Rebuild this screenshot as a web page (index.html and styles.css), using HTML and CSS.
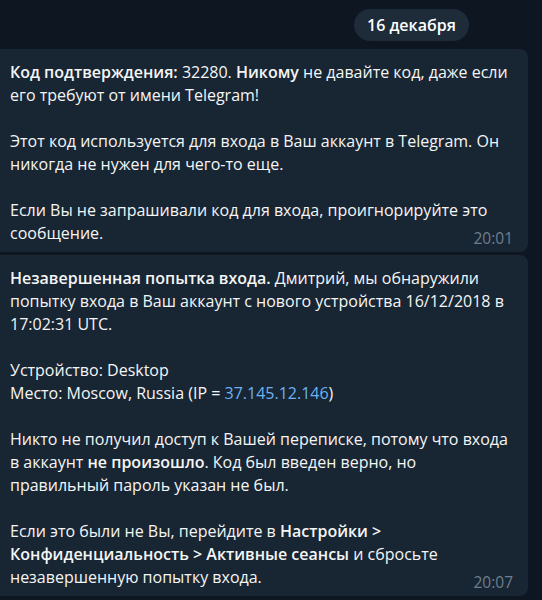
FILE: index.html
```html
<!DOCTYPE html>
<html lang="ru">
<head>
<meta charset="utf-8">
<link rel="stylesheet" href="styles.css">
</head>
<body>
<div class="chat">
  <div class="date-row"><span class="date">16 декабря</span></div>
  <div class="bubble">
    <p><b>Код подтверждения:</b> 32280. <b>Никому</b> не давайте код, даже если его требуют от имени Telegram!</p>
    <p>Этот код используется для входа в Ваш аккаунт в Telegram. Он никогда не нужен для чего-то еще.</p>
    <p>Если Вы не запрашивали код для входа, проигнорируйте это сообщение.</p>
    <span class="time">20:01</span>
  </div>
  <div class="bubble">
    <p><b>Незавершенная попытка входа.</b> Дмитрий, мы обнаружили попытку входа в Ваш аккаунт с нового устройства 16/12/2018 в 17:02:31 UTC.</p>
    <p>Устройство: Desktop<br>Место: Moscow, Russia (IP = <a class="link">37.145.12.146</a>)</p>
    <p>Никто не получил доступ к Вашей переписке, потому что входа в аккаунт <b>не произошло</b>. Код был введен верно, но правильный пароль указан не был.</p>
    <p>Если это были не Вы, перейдите в <b>Настройки &gt; Конфиденциальность &gt; Активные сеансы</b> и сбросьте незавершенную попытку входа.</p>
    <span class="time">20:07</span>
  </div>
</div>
</body>
</html>
```
FILE: styles.css
```css
html, body {
  margin: 0;
  padding: 0;
  background: #0e1621;
}
body {
  font-family: "Open Sans", "Noto Sans", sans-serif;
  color: #f5f5f5;
  font-size: 16px;
  line-height: 23px;
}
.chat {
  display: flex;
  flex-direction: column;
  gap: 3px;
  width: 528px;
}
.date-row {
  display: flex;
  padding: 9px 0 5px 354px;
}
.date {
  display: inline-block;
  height: 32px;
  line-height: 32px;
  padding: 0 13px;
  border-radius: 16px;
  background: #1e2c3a;
  font-weight: 600;
  font-size: 16px;
  color: #ffffff;
}
.bubble {
  position: relative;
  background: #182533;
  border-radius: 0 8px 8px 0;
  padding: 12px 12px 7px 10px;
}
.bubble p {
  margin: 0 0 23px 0;
}
.bubble p:last-of-type {
  margin-bottom: 0;
}
.bubble b {
  font-weight: 600;
}
.link {
  color: #6ab3f3;
}
.time {
  position: absolute;
  right: 15px;
  bottom: 4px;
  font-size: 15.5px;
  color: #6d7f8f;
  line-height: 20px;
}
```
